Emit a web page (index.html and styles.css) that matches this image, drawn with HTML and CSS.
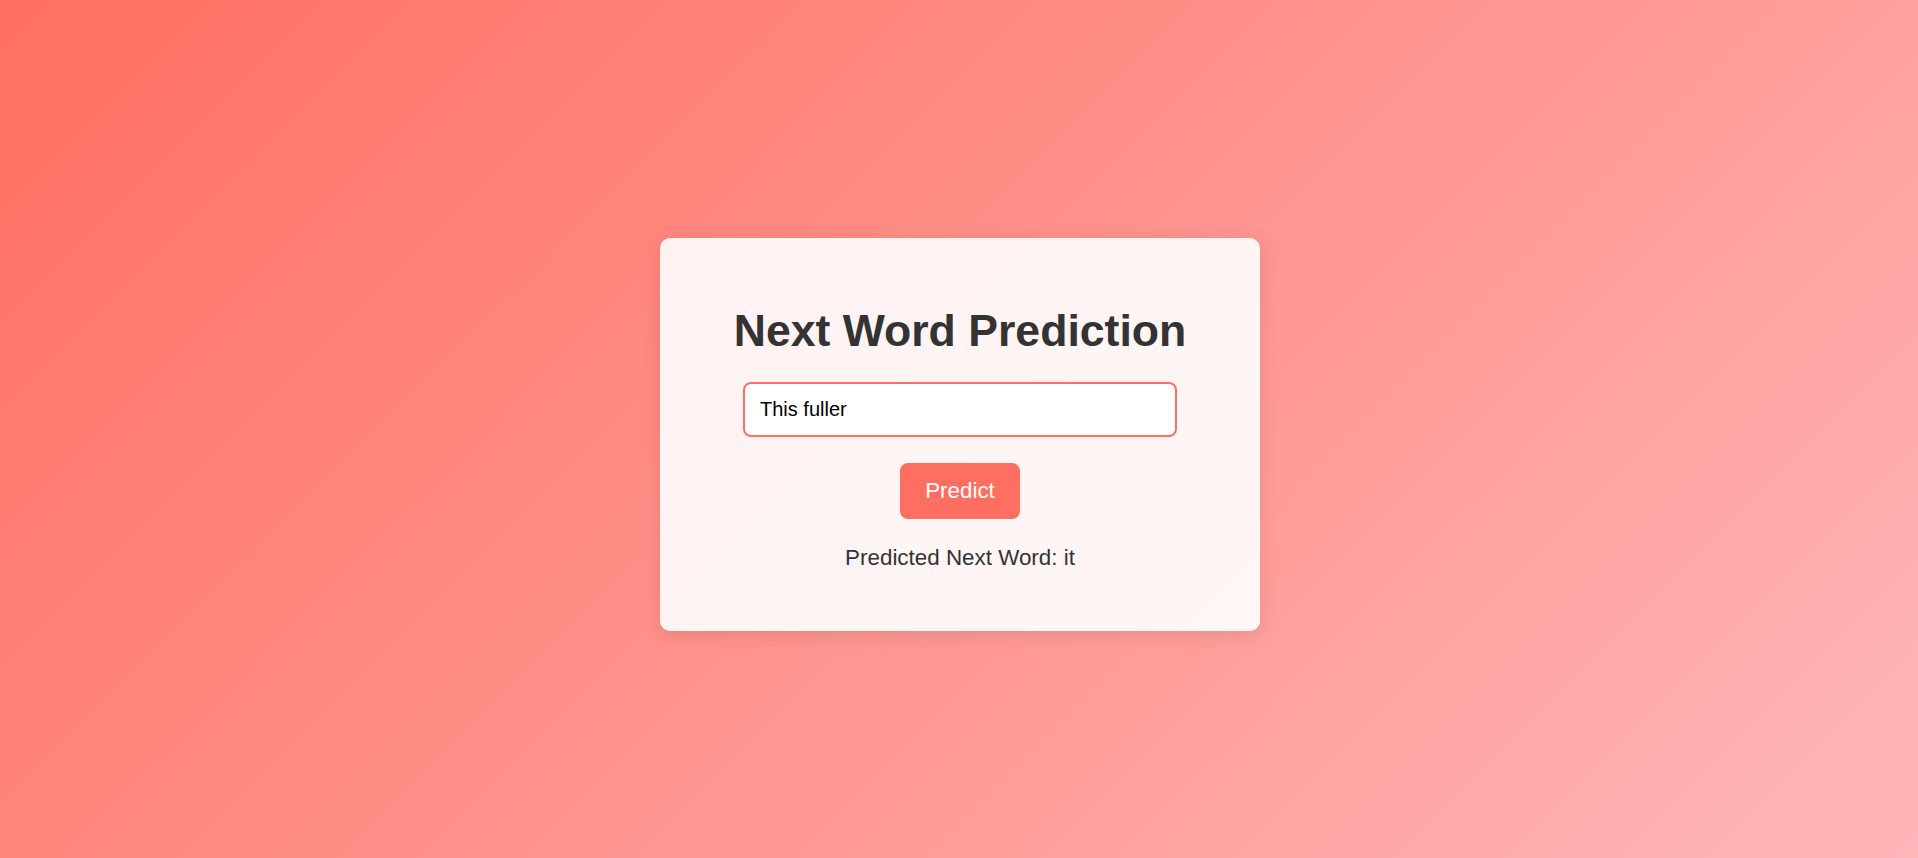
FILE: index.html
```html
<!DOCTYPE html>
<html lang="en">
<head>
<meta charset="utf-8">
<title>Next Word Prediction</title>
<link rel="stylesheet" href="styles.css">
</head>
<body>
  <main class="card">
    <h1 class="title">Next Word Prediction</h1>
    <input class="text-input" type="text" value="This fuller">
    <button class="predict-btn" type="button">Predict</button>
    <p class="result">Predicted Next Word: it</p>
  </main>
</body>
</html>
```

FILE: styles.css
```css
html, body {
  margin: 0;
  padding: 0;
}

body {
  box-sizing: border-box;
  height: 100vh;
  padding: 10px 0 0 2px;
  display: flex;
  align-items: center;
  justify-content: center;
  background: linear-gradient(135deg, #ff6f61 0%, #ffb6b9 100%);
  font-family: "Liberation Sans", Arial, sans-serif;
  overflow: hidden;
}

.card {
  box-sizing: border-box;
  width: 600px;
  padding: 68px 30px 60px;
  background: rgba(255, 255, 255, 0.9);
  border-radius: 10px;
  box-shadow: 0 4px 20px rgba(0, 0, 0, 0.1);
  display: flex;
  flex-direction: column;
  align-items: center;
  gap: 26px;
}

.title {
  margin: 0;
  font-size: 44.6px;
  font-weight: bold;
  color: #333;
  line-height: normal;
}

.text-input {
  width: 400px;
  padding: 14px 15px;
  font-family: "Liberation Sans", Arial, sans-serif;
  font-size: 20px;
  color: #000;
  background: #fff;
  border: 2px solid #ff6f61;
  border-radius: 8px;
  outline: none;
}

.predict-btn {
  padding: 15px 25px;
  font-family: "Liberation Sans", Arial, sans-serif;
  font-size: 22.4px;
  color: #fff;
  background: #ff6f61;
  border: none;
  border-radius: 8px;
  cursor: pointer;
}

.result {
  margin: 0;
  font-size: 22.4px;
  color: #333;
  line-height: normal;
}
```
